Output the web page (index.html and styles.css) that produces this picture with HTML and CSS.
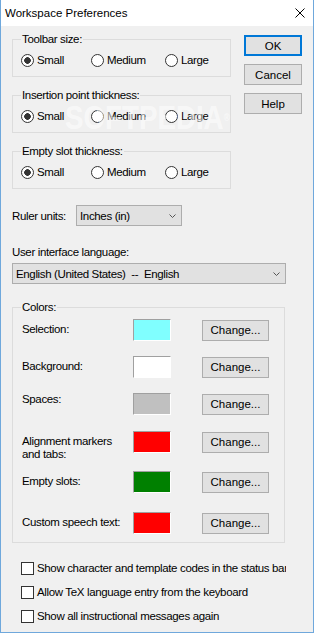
FILE: index.html
```html
<!DOCTYPE html>
<html lang="en">
<head>
  <meta charset="UTF-8">
  <meta name="viewport" content="width=device-width, initial-scale=1.0">
  <title>Workspace Preferences</title>
  <link rel="stylesheet" href="styles.css">
</head>
<body>
  <div class="window">
    <!-- Title bar -->
    <div class="titlebar">
      <span class="title">Workspace Preferences</span>
      <svg class="close" width="10" height="10" viewBox="0 0 10 10">
        <path d="M0.5 0.5L9.5 9.5M9.5 0.5L0.5 9.5" stroke="#000" stroke-width="1" fill="none"/>
      </svg>
    </div>

    <div class="client">
      <div class="top">
        <div class="groups">
          <fieldset class="group">
            <legend>Toolbar size:</legend>
            <div class="options">
              <label class="option"><span class="radio on"></span>Small</label>
              <label class="option"><span class="radio"></span>Medium</label>
              <label class="option"><span class="radio"></span>Large</label>
            </div>
          </fieldset>
          <fieldset class="group">
            <legend>Insertion point thickness:</legend>
            <div class="options">
              <label class="option"><span class="radio on"></span>Small</label>
              <label class="option"><span class="radio"></span>Medium</label>
              <label class="option"><span class="radio"></span>Large</label>
            </div>
          </fieldset>
          <fieldset class="group">
            <legend>Empty slot thickness:</legend>
            <div class="options">
              <label class="option"><span class="radio on"></span>Small</label>
              <label class="option"><span class="radio"></span>Medium</label>
              <label class="option"><span class="radio"></span>Large</label>
            </div>
          </fieldset>
        </div>

        <div class="buttons">
          <button class="btn default">OK</button>
          <button class="btn">Cancel</button>
          <button class="btn">Help</button>
        </div>
      </div>

      <div class="ruler">
        <span class="ruler-label">Ruler units:</span>
        <div class="select units">
          <span>Inches (in)</span>
          <svg width="7" height="4" viewBox="0 0 7 4"><path d="M0.5 0.5L3.5 3.5L6.5 0.5" stroke="#555" fill="none"/></svg>
        </div>
      </div>

      <div class="lang-label">User interface language:</div>
      <div class="select language">
        <span>English (United States)  --  English</span>
        <svg width="7" height="4" viewBox="0 0 7 4"><path d="M0.5 0.5L3.5 3.5L6.5 0.5" stroke="#555" fill="none"/></svg>
      </div>

      <fieldset class="group colors">
        <legend>Colors:</legend>
        <div class="color-grid">
          <span class="color-label">Selection:</span>
          <span class="swatch cyan"></span>
          <button class="btn change">Change...</button>

          <span class="color-label">Background:</span>
          <span class="swatch white"></span>
          <button class="btn change">Change...</button>

          <span class="color-label high">Spaces:</span>
          <span class="swatch gray"></span>
          <button class="btn change">Change...</button>

          <span class="color-label">Alignment markers<br>and tabs:</span>
          <span class="swatch red"></span>
          <button class="btn change">Change...</button>

          <span class="color-label">Empty slots:</span>
          <span class="swatch green"></span>
          <button class="btn change">Change...</button>

          <span class="color-label">Custom speech text:</span>
          <span class="swatch red"></span>
          <button class="btn change">Change...</button>
        </div>
      </fieldset>

      <div class="checks">
        <label class="check-row"><span class="check"></span>Show character and template codes in the status bar</label>
        <label class="check-row"><span class="check"></span>Allow TeX language entry from the keyboard</label>
        <label class="check-row"><span class="check"></span>Show all instructional messages again</label>
      </div>
    </div>

    <div class="watermark">SOFTPEDIA<sup>®</sup></div>
  </div>
</body>
</html>
```

FILE: styles.css
```css
body {
  margin: 0;
  font-family: "Liberation Sans", Arial, sans-serif;
  font-size: 11.5px;
  letter-spacing: -0.35px;
  color: #000;
  background: #f0f0f0;
}

.window {
  position: relative;
  width: 314px;
  height: 633px;
  box-sizing: border-box;
  border: 1px solid #6fa8dc;
  border-top: 0;
  background: #f0f0f0;
  overflow: hidden;
}

/* Title bar */
.titlebar {
  height: 26px;
  background: #fff;
  display: flex;
  align-items: center;
  justify-content: space-between;
  padding: 0 8px 0 4px;
}

.title {
  font-size: 11.5px;
  letter-spacing: 0;
}

.client {
  padding: 7px 0 0 11px;
}

.top {
  display: flex;
  align-items: flex-start;
}

.groups {
  width: 219px;
  display: flex;
  flex-direction: column;
  gap: 12px;
}

/* Group boxes */
.group {
  margin: 0;
  padding: 8px 0 9px 8px;
  border: 1px solid #dcdcdc;
  min-width: 0;
}

.group legend {
  padding: 0 1px;
  line-height: 13px;
}

.options {
  display: grid;
  grid-template-columns: 70px 74px auto;
  align-items: center;
  line-height: 13px;
}

.option {
  display: flex;
  align-items: center;
  gap: 3px;
}

.radio {
  width: 13px;
  height: 13px;
  box-sizing: border-box;
  border: 1px solid #333;
  border-radius: 50%;
  background: #fff;
}

.radio.on {
  background: radial-gradient(circle, #333 0 3px, #fff 3.6px);
}

/* Buttons */
.buttons {
  margin: 2px 0 0 13px;
  display: flex;
  flex-direction: column;
  gap: 8px;
}

.btn {
  font: inherit;
  color: #000;
  width: 58px;
  height: 21px;
  padding: 0;
  background: #e1e1e1;
  border: 1px solid #adadad;
}

.btn.default {
  border: 2px solid #0078d7;
}

/* Dropdowns */
.ruler {
  display: flex;
  align-items: center;
  margin-top: 16px;
}

.ruler-label {
  width: 64px;
}

.select {
  box-sizing: border-box;
  height: 21px;
  border: 1px solid #adadad;
  background: #e1e1e1;
  display: flex;
  align-items: center;
  justify-content: space-between;
  padding: 0 5px 0 3px;
  white-space: pre;
}

.select.units {
  width: 106px;
}

.lang-label {
  margin-top: 20px;
  line-height: 13px;
}

.select.language {
  width: 274px;
  margin-top: 4px;
}

/* Colors */
.colors {
  margin-top: 17px;
  width: 273px;
  box-sizing: border-box;
  padding: 5px 0 8px 9px;
}

.colors legend {
  margin-left: -1px;
}

.color-grid {
  display: grid;
  grid-template-columns: 111px 69px 67px;
  grid-template-rows: 37px 37px 38px 40px 41px 22px;
  align-items: start;
  line-height: 13px;
}

.color-label {
  padding-top: 4px;
}

.color-label.high {
  padding-top: 0;
}

.swatch {
  width: 38px;
  height: 22px;
  box-sizing: border-box;
  border: 1px solid;
  border-color: #a0a0a0 #fff #fff #a0a0a0;
}

.swatch.cyan { background: #80ffff; }
.swatch.white { background: #fff; }
.swatch.gray { background: #c0c0c0; }
.swatch.red { background: #ff0000; }
.swatch.green { background: #008000; }

.btn.change {
  width: 67px;
  margin-top: 1px;
}

/* Checkboxes */
.checks {
  margin-top: 19px;
  padding-left: 9px;
  width: 265px;
  display: flex;
  flex-direction: column;
  gap: 11px;
}

.check-row {
  display: flex;
  align-items: center;
  gap: 3px;
  line-height: 13px;
  white-space: nowrap;
  overflow: hidden;
}

.check {
  flex: none;
  width: 13px;
  height: 13px;
  box-sizing: border-box;
  border: 1px solid #333;
  background: #fff;
}

/* Faint watermark over the dialog */
.watermark {
  position: absolute;
  left: 64px;
  top: 101px;
  font-size: 33px;
  font-weight: bold;
  line-height: 34px;
  letter-spacing: 0;
  color: rgba(255, 255, 255, 0.55);
  transform: scaleX(0.84);
  transform-origin: left top;
  pointer-events: none;
}

.watermark sup {
  font-size: 10px;
  vertical-align: top;
}
```
